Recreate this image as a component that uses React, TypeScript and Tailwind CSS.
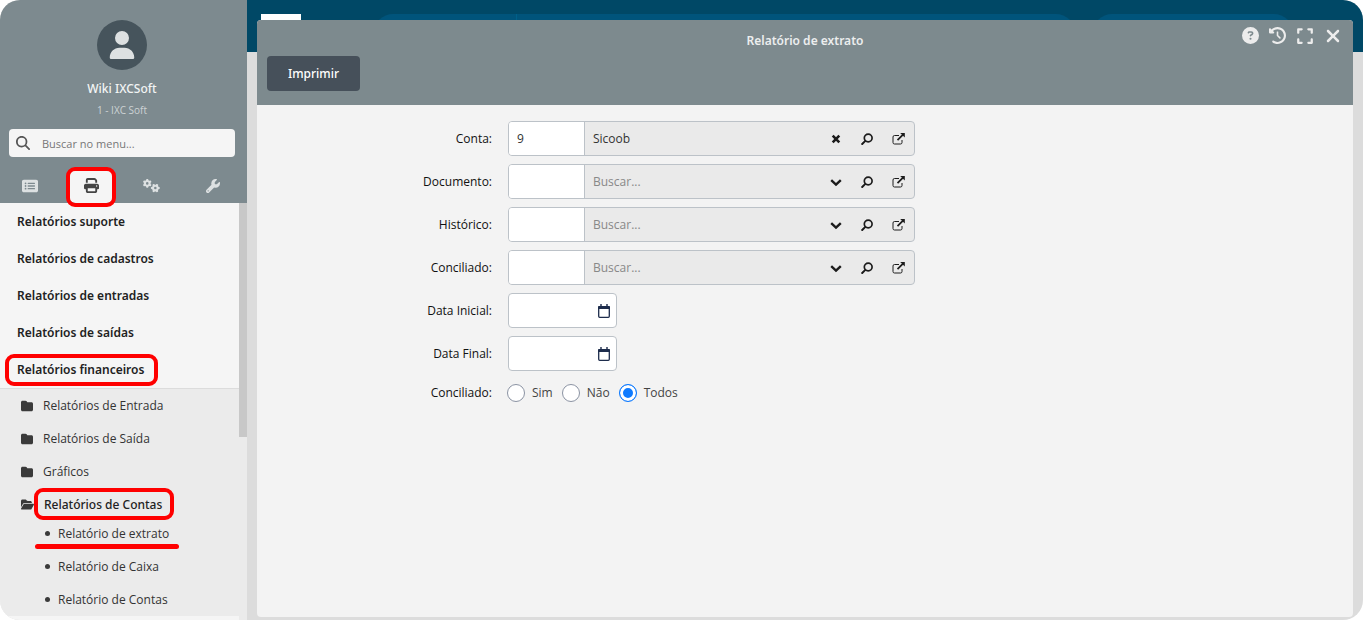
import { useState } from "react";
import type { ReactNode } from "react";
import { clsx } from "clsx";
import {
  FaCircleQuestion,
  FaClockRotateLeft,
  FaExpand,
  FaFolder,
  FaFolderOpen,
  FaGears,
  FaMagnifyingGlass,
  FaPrint,
  FaRectangleList,
  FaUser,
  FaWrench,
  FaXmark,
} from "react-icons/fa6";

const TABS = [
  { id: "cadastros", label: "Cadastros", icon: <FaRectangleList size={16} /> },
  { id: "relatorios", label: "Relatórios", icon: <FaPrint size={15} /> },
  { id: "sistema", label: "Sistema", icon: <FaGears size={17} /> },
  { id: "ferramentas", label: "Ferramentas", icon: <FaWrench size={14} /> },
];

const SECTIONS = [
  "Relatórios suporte",
  "Relatórios de cadastros",
  "Relatórios de entradas",
  "Relatórios de saídas",
];

const FOLDERS = ["Relatórios de Entrada", "Relatórios de Saída", "Gráficos"];

const LOOKUPS = [
  { id: "conta", label: "Conta:", code: "9", text: "Sicoob" },
  { id: "documento", label: "Documento:", code: "", text: "" },
  { id: "historico", label: "Histórico:", code: "", text: "" },
  { id: "conciliado", label: "Conciliado:", code: "", text: "" },
];

const DATES = [
  { id: "data-inicial", label: "Data Inicial:" },
  { id: "data-final", label: "Data Final:" },
];

const OPTIONS = ["Sim", "Não", "Todos"];

// Headings and highlighted labels use Noto, body text uses Open Sans
const SEMIBOLD = "font-['Noto_Sans',sans-serif] font-semibold";
const MEDIUM = "font-['Noto_Sans',sans-serif] font-medium";

export default function App() {
  return (
    <div className="flex h-screen overflow-hidden rounded-[20px] bg-[#dcdcdc] font-['Open_Sans','Noto_Sans',sans-serif] text-[12px] leading-4 text-[#222]">
      <Sidebar />
      <div className="relative min-w-0 flex-1">
        <Topbar />
        <ReportWindow />
      </div>
    </div>
  );
}

function Sidebar() {
  const [tab, setTab] = useState("relatorios");

  return (
    <aside className="flex w-[247px] shrink-0 flex-col bg-[#f5f5f5]">
      <div className="flex flex-col bg-[#7d8a8f] pt-5">
        <div className="flex flex-col items-center pr-[3px]">
          <div className="flex size-[50px] items-center justify-center rounded-full bg-[#46545c] text-[#dde1e2]">
            <FaUser size={28} />
          </div>
          <p className={clsx("mt-[11px] text-[#f2f4f4]", MEDIUM)}>Wiki IXCSoft</p>
          <p className="mt-[5px] text-[10px] text-[#ccd2d4]">1 - IXC Soft</p>
        </div>
        <label className="mt-[11px] mr-3 ml-[9px] flex h-7 items-center gap-3 rounded bg-[#f5f5f5] px-[7px] text-[#555]">
          <FaMagnifyingGlass size={14} className="shrink-0" />
          <input
            type="text"
            aria-label="Buscar no menu"
            placeholder="Buscar no menu..."
            className="w-full min-w-0 bg-transparent pt-0.5 text-[11px] outline-none placeholder:text-[#777]"
          />
        </label>
        <div className="mt-[11px] flex h-[35px] justify-around pr-1" role="tablist">
          {TABS.map(({ id, label, icon }) => (
            <button
              key={id}
              type="button"
              role="tab"
              aria-label={label}
              aria-selected={tab === id}
              onClick={() => setTab(id)}
              className={clsx(
                "relative flex w-[46px] items-center justify-center rounded-lg",
                tab === id ? "bg-[#f5f5f5] text-[#444]" : "text-[#dde1e2]"
              )}
            >
              {icon}
              {id === "relatorios" && (
                <span className="absolute -inset-x-[2px] -top-px -bottom-1 rounded-[9px] border-4 border-[#f00]" />
              )}
            </button>
          ))}
        </div>
      </div>

      <div className="flex min-h-0 flex-1">
        <nav className="min-w-0 flex-1" aria-label="Relatórios">
          {SECTIONS.map((name) => (
            <a key={name} href="#" className={clsx("flex h-[37px] items-center pl-[17px]", SEMIBOLD)}>
              {name}
            </a>
          ))}
          <a href="#" className={clsx("relative flex h-[37px] items-center pl-[17px]", SEMIBOLD)}>
            Relatórios financeiros
            <span className="absolute top-[3px] left-[5px] h-8 w-[153px] rounded-[9px] border-4 border-[#f00]" />
          </a>

          <div className="border-t border-[#dcdcdc] bg-[#ebebeb] text-[#333]">
            {FOLDERS.map((name) => (
              <a key={name} href="#" className="flex h-[33px] items-center gap-[10px] pl-[21px]">
                <FaFolder size={12} className="text-[#3a3a3a]" />
                {name}
              </a>
            ))}
            <a
              href="#"
              className={clsx(
                "relative flex h-[29px] items-center gap-[10px] pt-1 pl-[21px] text-[#222]",
                MEDIUM
              )}
            >
              <FaFolderOpen size={13} className="text-[#3a3a3a]" />
              Relatórios de Contas
              <span className="absolute top-0 left-[34px] h-8 w-[140px] rounded-[9px] border-4 border-[#f00]" />
            </a>
            <SubLink name="Relatório de extrato" marked />
            <SubLink name="Relatório de Caixa" />
            <SubLink name="Relatório de Contas" />
          </div>
        </nav>
        <div className="w-2 shrink-0 bg-[#ebebeb]">
          <div className="h-[234px] bg-[#c8c8c8]" />
        </div>
      </div>
    </aside>
  );
}

function SubLink({ name, marked }: { name: string; marked?: boolean }) {
  return (
    <a href="#" className="relative flex h-[33px] items-center gap-2 pl-[45px]">
      <span className="size-[5px] rounded-full bg-[#3a3a3a]" />
      {name}
      {marked && (
        <span className="absolute top-[27px] left-[35px] h-[5px] w-[144px] rounded-full bg-[#f00]" />
      )}
    </a>
  );
}

function Topbar() {
  return (
    <header className="flex h-[52px] bg-[#004866] pt-[14px] pr-[70px] pl-[14px]">
      <div className="h-6 w-10 bg-white" />
      <div className="ml-[73px] flex flex-1 rounded-full bg-[#00547b]">
        <span className="ml-[142px] w-px bg-[#006089]" />
      </div>
      <div className="ml-[18px] w-[200px] rounded-full bg-[#00547b]" />
    </header>
  );
}

function ReportWindow() {
  return (
    <section
      role="dialog"
      aria-labelledby="window-title"
      className="absolute inset-x-[10px] top-5 bottom-[3px] flex flex-col overflow-hidden rounded bg-[#f3f3f3]"
    >
      <div className="bg-[#7d8a8e] pb-[14px]">
        <div className="grid h-9 grid-cols-[1fr_auto_1fr]">
          <h1 id="window-title" className={clsx("col-start-2 pt-[13px] text-[#eceeee]", SEMIBOLD)}>
            Relatório de extrato
          </h1>
          <div className="flex h-[31px] items-center justify-end gap-[10px] pr-[11px] text-[#ececec]">
            <IconButton label="Ajuda"><FaCircleQuestion size={17} /></IconButton>
            <IconButton label="Histórico"><FaClockRotateLeft size={17} /></IconButton>
            <IconButton label="Maximizar"><FaExpand size={18} /></IconButton>
            <IconButton label="Fechar"><FaXmark size={20} className="-mx-px" /></IconButton>
          </div>
        </div>
        <button
          type="button"
          className={clsx("ml-[10px] h-[35px] w-[93px] rounded bg-[#46505a] text-white", MEDIUM)}
        >
          Imprimir
        </button>
      </div>

      <form className="flex flex-col gap-2 pt-4" onSubmit={(e) => e.preventDefault()}>
        {LOOKUPS.map(({ id, label, code, text }) => (
          <Row key={id} id={id} label={label}>
            <div className="flex h-[35px] w-[407px] overflow-hidden rounded border border-[#bcc2c8] bg-[#eaeaea] text-[#333]">
              <input
                id={id}
                type="text"
                defaultValue={code}
                className="w-[76px] border-r border-[#bcc2c8] bg-white px-2 outline-none"
              />
              <input
                type="text"
                aria-label={`${label} descrição`}
                defaultValue={text}
                placeholder="Buscar..."
                className="min-w-0 flex-1 bg-transparent px-2 outline-none placeholder:text-[#888]"
              />
              <div className="flex pr-px text-[#1c1c1c]">
                {text ? (
                  <FieldButton label="Limpar"><ClearIcon /></FieldButton>
                ) : (
                  <FieldButton label="Abrir lista"><ChevronIcon /></FieldButton>
                )}
                <FieldButton label="Pesquisar"><LensIcon /></FieldButton>
                <FieldButton label="Abrir cadastro"><OpenIcon /></FieldButton>
              </div>
            </div>
          </Row>
        ))}

        {DATES.map(({ id, label }) => (
          <Row key={id} id={id} label={label}>
            <div className="flex h-[35px] w-[109px] items-center rounded border border-[#bcc2c8] bg-white pr-[5px]">
              <input id={id} type="text" className="min-w-0 flex-1 bg-transparent px-2 outline-none" />
              <IconButton label="Abrir calendário"><CalendarIcon /></IconButton>
            </div>
          </Row>
        ))}

        <div role="radiogroup" aria-labelledby="filtro-label" className="flex h-7 items-center gap-[15px]">
          <span id="filtro-label" className="w-[235px] shrink-0 text-right text-[#111]">
            Conciliado:
          </span>
          <div className="flex gap-[9px]">
            {OPTIONS.map((name) => (
              <label key={name} className="flex items-center gap-[7px] text-[#444]">
                <input
                  type="radio"
                  name="filtro-conciliado"
                  defaultChecked={name === "Todos"}
                  className="size-[18px] appearance-none rounded-full border border-[#8b93a3] bg-white checked:border-[#0f7bff] checked:bg-[#0f7bff] checked:shadow-[inset_0_0_0_3px_#fff]"
                />
                {name}
              </label>
            ))}
          </div>
        </div>
      </form>
    </section>
  );
}

function Row({ id, label, children }: { id: string; label: string; children: ReactNode }) {
  return (
    <div className="flex items-center gap-4">
      <label htmlFor={id} className="w-[235px] shrink-0 text-right text-[#111]">
        {label}
      </label>
      {children}
    </div>
  );
}

function IconButton({ label, children }: { label: string; children: ReactNode }) {
  return (
    <button type="button" aria-label={label} className="flex items-center justify-center">
      {children}
    </button>
  );
}

function FieldButton({ label, children }: { label: string; children: ReactNode }) {
  return (
    <button type="button" aria-label={label} className="flex w-[31px] items-center justify-center">
      {children}
    </button>
  );
}

/* ─── Icons ───────────────────────────────────────────────── */
function ClearIcon() {
  return (
    <svg width="12" height="12" viewBox="0 0 12 12" fill="none" aria-hidden>
      <path d="M2.7 2.7L9.3 9.3M9.3 2.7L2.7 9.3" stroke="currentColor" strokeWidth="2.6" />
    </svg>
  );
}

function ChevronIcon() {
  return (
    <svg width="12" height="12" viewBox="0 0 12 12" fill="none" aria-hidden>
      <path d="M1.2 4.2L6 8.6L10.8 4.2" stroke="currentColor" strokeWidth="2.4" />
    </svg>
  );
}

function LensIcon() {
  return (
    <svg width="12" height="12" viewBox="0 0 12 12" fill="none" aria-hidden>
      <circle cx="7.2" cy="5" r="3.9" stroke="currentColor" strokeWidth="1.7" />
      <path d="M4.3 7.9L1.2 11" stroke="currentColor" strokeWidth="2" strokeLinecap="round" />
    </svg>
  );
}

function OpenIcon() {
  return (
    <svg width="14" height="14" viewBox="0 0 14 14" fill="none" aria-hidden>
      <path d="M8 3.5H3.5Q2 3.5 2 5V10.5Q2 12 3.5 12H9.5Q11 12 11 10.5V8" stroke="currentColor" strokeWidth="1" />
      <path d="M6.5 8.2L12 2.7" stroke="currentColor" strokeWidth="1.8" />
      <path d="M9.2 1H13.8V5.6Z" fill="currentColor" />
    </svg>
  );
}

function CalendarIcon() {
  return (
    <svg width="14" height="14" viewBox="0 0 14 14" fill="none" aria-hidden>
      <rect x="1.7" y="2.7" width="10.6" height="10.6" rx="1" stroke="#1d2c4c" strokeWidth="1.3" />
      <path d="M1 3Q1 2 2 2H12Q13 2 13 3V5H1Z" fill="#1d2c4c" />
      <path d="M4 0V3M10 0V3" stroke="#1d2c4c" strokeWidth="1.4" />
    </svg>
  );
}
